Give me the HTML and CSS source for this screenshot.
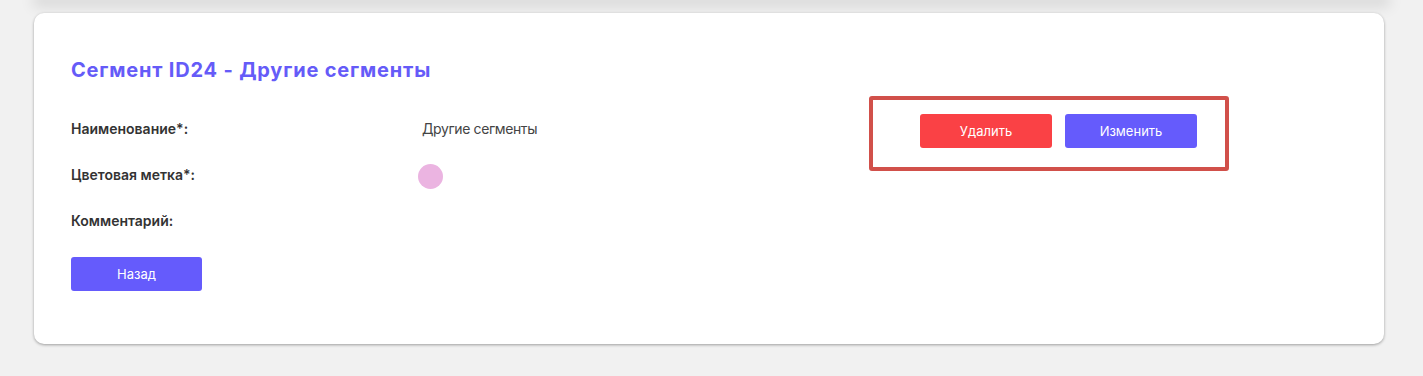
FILE: index.html
```html
<!DOCTYPE html>
<html lang="ru">
<head>
<meta charset="utf-8">
<title>Сегмент ID24</title>
<link rel="stylesheet" href="styles.css">
</head>
<body>
<div class="prev-card"></div>
<section class="card">
  <h1 class="title">Сегмент ID24 - Другие сегменты</h1>
  <div class="body">
    <div class="fields">
      <div class="row">
        <div class="label">Наименование*:</div>
        <div class="value">Другие сегменты</div>
      </div>
      <div class="row">
        <div class="label">Цветовая метка*:</div>
        <div class="value-color"><span class="dot"></span></div>
      </div>
      <div class="row">
        <div class="label">Комментарий:</div>
        <div class="value"></div>
      </div>
      <button class="btn btn-primary btn-back">Назад</button>
    </div>
    <div class="actions">
      <button class="btn btn-danger">Удалить</button>
      <button class="btn btn-primary">Изменить</button>
    </div>
  </div>
</section>
</body>
</html>
```

FILE: styles.css
```css
* { box-sizing: border-box; }
html, body { margin: 0; padding: 0; }
body {
  background: #f1f1f1;
  font-family: Inter, "Noto Sans", sans-serif;
  color: #333;
  height: 376px;
  overflow: hidden;
}
.prev-card {
  height: 0;
  margin: 0 40px;
  box-shadow: 0 0 14px 7px rgba(0, 0, 0, 0.1);
}
.card {
  margin: 13px 39px 0 34px;
  background: #fff;
  border-radius: 10px;
  box-shadow: 0 1px 3px rgba(0, 0, 0, 0.35);
  padding: 45px 37px 53px 37px;
}
.title {
  margin: 0;
  font-size: 20px;
  line-height: 24px;
  font-weight: 700;
  letter-spacing: 0.8px;
  color: #655bf8;
}
.body {
  display: flex;
  margin-top: 14px;
  align-items: flex-start;
}
.fields {
  width: 798px;
  padding-top: 9px;
}
.row {
  display: grid;
  grid-template-columns: 347px 1fr;
  height: 46px;
  align-items: center;
}
.label {
  font-size: 14px;
  font-weight: 600;
  color: #333;
}
.value {
  font-size: 14px;
  font-weight: 400;
  letter-spacing: -0.4px;
  color: #444;
  padding-left: 4px;
}
.value-color { display: flex; align-items: center; }
.dot {
  width: 25px;
  height: 25px;
  border-radius: 50%;
  background: #ebb4e1;
  margin-top: 5px;
}
.btn {
  border: 0;
  border-radius: 3px;
  height: 34px;
  width: 132px;
  color: #fff;
  font-family: Inter, "Noto Sans", sans-serif;
  font-size: 13px;
  font-weight: 400;
  cursor: pointer;
}
.btn-primary { background: #655bfc; }
.btn-danger { background: #fa4145; }
.btn-back { margin-top: 14px; width: 131px; }
.actions {
  width: 360px;
  height: 75px;
  border: 4px solid #d1504a;
  border-radius: 3px;
  display: flex;
  gap: 13px;
  padding: 14px 0 0 47px;
}
```
